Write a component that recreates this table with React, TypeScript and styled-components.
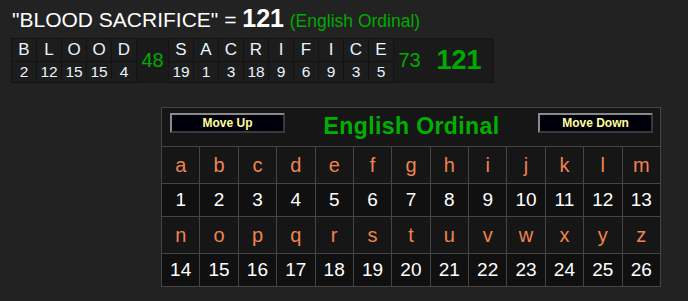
import React from 'react';
import styled, { createGlobalStyle } from 'styled-components';

const phrase = ['BLOOD', 'SACRIFICE'];
const alphabet = 'abcdefghijklmnopqrstuvwxyz'.split('');

const ordinal = (ch: string) => ch.toLowerCase().charCodeAt(0) - 96;
const wordSum = (word: string) => word.split('').reduce((acc, ch) => acc + ordinal(ch), 0);
const total = phrase.reduce((acc, w) => acc + wordSum(w), 0);

export default function App(): JSX.Element {
  const rows = [alphabet.slice(0, 13), alphabet.slice(13)];

  return (
    <>
      <GlobalStyle />
      <Page>
        <Heading>
          "{phrase.join(' ')}" = <Total>{total}</Total> <CipherName>(English Ordinal)</CipherName>
        </Heading>

        <Breakdown>
          <tbody>
            <tr>
              {phrase.map((word) => (
                <React.Fragment key={word}>
                  {word.split('').map((ch, i) => (
                    <LetterCell key={i}>{ch}</LetterCell>
                  ))}
                  <SumCell rowSpan={2}>{wordSum(word)}</SumCell>
                </React.Fragment>
              ))}
              <TotalCell rowSpan={2}>{total}</TotalCell>
            </tr>
            <tr>
              {phrase.map((word) =>
                word.split('').map((ch, i) => <ValueCell key={word + i}>{ordinal(ch)}</ValueCell>)
              )}
            </tr>
          </tbody>
        </Breakdown>

        <Chart>
          <tbody>
            <tr>
              <HeaderCell colSpan={13}>
                <HeaderBar>
                  <MoveButton>Move Up</MoveButton>
                  <ChartTitle>English Ordinal</ChartTitle>
                  <MoveButton>Move Down</MoveButton>
                </HeaderBar>
              </HeaderCell>
            </tr>
            {rows.map((row, r) => (
              <React.Fragment key={r}>
                <tr>
                  {row.map((ch) => (
                    <ChartLetter key={ch}>{ch}</ChartLetter>
                  ))}
                </tr>
                <tr>
                  {row.map((ch) => (
                    <ChartValue key={ch}>{ordinal(ch)}</ChartValue>
                  ))}
                </tr>
              </React.Fragment>
            ))}
          </tbody>
        </Chart>
      </Page>
    </>
  );
}

// styles
const GlobalStyle = createGlobalStyle`
  html, body {
    margin: 0;
    background: #222222;
    font-family: "Liberation Sans", Arial, sans-serif;
  }
`;

const Page = styled.div`
  padding: 3px 0 0 11px;
  height: 301px;
  box-sizing: border-box;
`;

const Heading = styled.div`
  color: #ffffff;
  font-size: 21px;
  line-height: 30px;
  height: 30px;
  white-space: nowrap;
  margin-left: 1px;
`;

const Total = styled.span`
  font-size: 25px;
  font-weight: bold;
`;

const CipherName = styled.span`
  color: #00aa00;
  font-size: 17.5px;
`;

const Breakdown = styled.table`
  margin-top: 5px;
  border-collapse: collapse;
  border: 1px solid #151515;
  background: #1a1a1a;

  td {
    padding: 0;
    text-align: center;
  }
`;

const LetterCell = styled.td`
  width: 24px;
  height: 22px;
  border: 1px solid #131313;
  background: #1d1d1d;
  color: #e8f4ff;
  font-size: 17px;
`;

const ValueCell = styled.td`
  width: 24px;
  height: 20px;
  border: 1px solid #131313;
  background: #1d1d1d;
  color: #e8f4ff;
  font-size: 15.5px;
`;

const SumCell = styled.td`
  width: 31px;
  color: #00aa00;
  font-size: 20px;
`;

const TotalCell = styled.td`
  width: 68px;
  color: #00aa00;
  font-size: 27px;
  font-weight: bold;
`;

const Chart = styled.table`
  margin: 24px 0 0 150px;
  width: 500px;
  table-layout: fixed;
  border-collapse: collapse;
  border: 1px solid #444444;
  background: #161616;

  td {
    padding: 0;
    text-align: center;
    border: 1px solid #444444;
  }
`;

const HeaderCell = styled.td`
  height: 38px;
`;

const HeaderBar = styled.div`
  display: flex;
  align-items: flex-start;
  justify-content: space-between;
  padding: 5px 7px 0 8px;
  height: 38px;
  box-sizing: border-box;
`;

const MoveButton = styled.button`
  width: 115px;
  height: 20px;
  padding: 0;
  background: #00000a;
  border: 2px solid;
  border-color: #8a8a8a #3a3a3a #3a3a3a #8a8a8a;
  color: #ffff99;
  font-family: "Liberation Sans", Arial, sans-serif;
  font-size: 12px;
  font-weight: bold;
`;

const ChartTitle = styled.div`
  color: #00b000;
  font-size: 23px;
  font-weight: bold;
  letter-spacing: 0.4px;
  line-height: 26px;
`;

const ChartLetter = styled.td`
  height: 36px;
  background: #161616;
  color: #ee8450;
  font-size: 20px;
`;

const ChartValue = styled.td`
  height: 32px;
  background: #101010;
  color: #ffffff;
  font-size: 19px;
`;
